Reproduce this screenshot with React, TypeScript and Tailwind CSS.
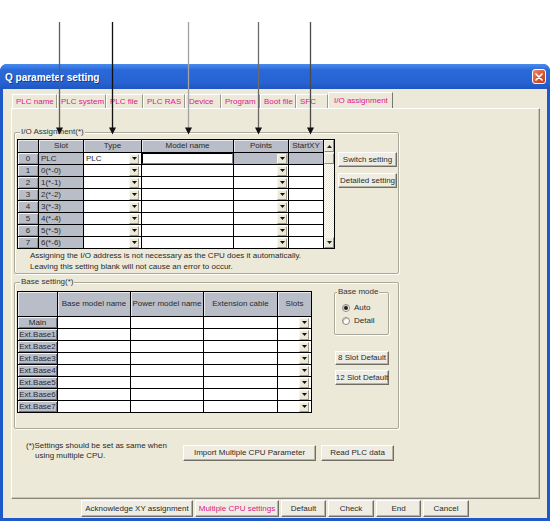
import React from 'react';

const HEAD = 'bg-[#b9bdc8]';

function Btn({ children, className = '', pink = false }: { children: React.ReactNode; className?: string; pink?: boolean }) {
  return (
    <div
      className={`flex items-center justify-center whitespace-nowrap border border-white border-r-[#716f64] border-b-[#716f64] bg-[#efede3] text-[8px] leading-none shadow-[inset_-1px_-1px_0_#b5b2a2] ${
        pink ? 'text-[#e0168a]' : 'text-[#2a2a2a]'
      } ${className}`}
    >
      {children}
    </div>
  );
}

function Drop({ className = '' }: { className?: string }) {
  return (
    <span
      className={`ml-auto flex h-[10px] w-[10px] shrink-0 items-center justify-center border border-[#f7f6f1] border-r-[#a09d8f] border-b-[#a09d8f] bg-[#ECE9D8] ${className}`}
    >
      <svg width="5" height="3" viewBox="0 0 5 3">
        <path d="M0 0h5L2.5 3z" fill="#111" />
      </svg>
    </span>
  );
}

function IOTable() {
  const slots = ['PLC', '0(*-0)', '1(*-1)', '2(*-2)', '3(*-3)', '4(*-4)', '5(*-5)', '6(*-6)'];
  const hdr = `flex h-[12px] items-center justify-center ${HEAD} text-[8px] leading-none shadow-[inset_1px_1px_0_#e6e8ee]`;
  const cell = 'flex h-[11px] items-center pl-[2px] text-[8px] leading-none';
  return (
    <div className="flex gap-px border border-black bg-black">
      <div className="grid grid-cols-[20px_44px_57px_91px_54px_34px] gap-px bg-black">
        <div className={hdr} />
        <div className={hdr}>Slot</div>
        <div className={hdr}>Type</div>
        <div className={hdr}>Model name</div>
        <div className={hdr}>Points</div>
        <div className={hdr}>StartXY</div>
        {slots.map((s, i) => (
          <React.Fragment key={s}>
            <div
              className={`flex h-[11px] items-center justify-center ${HEAD} text-[8px] leading-none shadow-[inset_1px_1px_0_#f2f3f6,inset_-1px_-1px_0_#8c8f98]`}
            >
              {i}
            </div>
            <div className={`${cell} ${HEAD}`}>{s}</div>
            <div className={`${cell} bg-white`}>
              {i === 0 ? 'PLC' : ''}
              <Drop className="mr-[2px]" />
            </div>
            {i === 0 ? (
              <div className="h-[11px] border border-black border-r-[#8a8a8a] border-b-[#8a8a8a] bg-white" />
            ) : (
              <div className={`${cell} bg-white`} />
            )}
            <div className={`${cell} ${i === 0 ? HEAD : 'bg-white'}`}>
              <Drop className="mr-[1px]" />
            </div>
            <div className={`${cell} ${i === 0 ? HEAD : 'bg-white'}`} />
          </React.Fragment>
        ))}
      </div>
      <div className="flex w-[10px] flex-col bg-[#f3f2ec]">
        <div className="flex h-[12px] items-center justify-center border border-[#f7f6f1] border-r-[#8e8b7e] border-b-[#8e8b7e] bg-[#ECE9D8]">
          <svg width="5" height="3" viewBox="0 0 5 3">
            <path d="M0 3h5L2.5 0z" fill="#222" />
          </svg>
        </div>
        <div className="mt-px h-[11px] border border-[#f7f6f1] border-r-[#8e8b7e] border-b-[#8e8b7e] bg-[#ECE9D8]" />
        <div className="flex-1 bg-[repeating-conic-gradient(#ffffff_0%_25%,#e8e6dc_0%_50%)] bg-[length:2px_2px]" />
        <div className="flex h-[11px] items-center justify-center border border-[#f7f6f1] border-r-[#8e8b7e] border-b-[#8e8b7e] bg-[#ECE9D8]">
          <svg width="5" height="3" viewBox="0 0 5 3">
            <path d="M0 0h5L2.5 3z" fill="#222" />
          </svg>
        </div>
      </div>
    </div>
  );
}

function BaseTable() {
  const bases = ['Main', 'Ext.Base1', 'Ext.Base2', 'Ext.Base3', 'Ext.Base4', 'Ext.Base5', 'Ext.Base6', 'Ext.Base7'];
  const hdr = `flex h-[24px] items-center justify-center ${HEAD} text-[8px] leading-none shadow-[inset_1px_1px_0_#e6e8ee]`;
  return (
    <div className="grid grid-cols-[39px_72px_72px_73px_33px] gap-px border border-black bg-black">
      <div className={hdr} />
      <div className={hdr}>Base model name</div>
      <div className={hdr}>Power model name</div>
      <div className={hdr}>Extension cable</div>
      <div className={hdr}>Slots</div>
      {bases.map((b) => (
        <React.Fragment key={b}>
          <div
            className={`flex h-[11px] items-center justify-center ${HEAD} text-[8px] leading-none shadow-[inset_1px_1px_0_#f2f3f6,inset_-1px_-1px_0_#6e7079]`}
          >
            {b}
          </div>
          <div className="h-[11px] bg-white" />
          <div className="h-[11px] bg-white" />
          <div className="h-[11px] bg-white" />
          <div className="flex h-[11px] items-center bg-white">
            <Drop className="mr-[2px]" />
          </div>
        </React.Fragment>
      ))}
    </div>
  );
}

function Radio({ label, checked = false }: { label: string; checked?: boolean }) {
  return (
    <div className="flex h-[10px] items-center gap-[4px] text-[8px] leading-none">
      <span className="flex h-[8px] w-[8px] items-center justify-center rounded-full border border-[#8d8b80] bg-white shadow-[inset_1px_1px_0_#c9c7bc]">
        {checked && <span className="h-[4px] w-[4px] rounded-full bg-[#1d1d1d]" />}
      </span>
      {label}
    </div>
  );
}

const GROUP = 'relative rounded-[2px] border border-[#aaa89a] shadow-[1px_1px_0_#fff,inset_1px_1px_0_#fff]';
const LEGEND = 'absolute top-[-6px] bg-[#ECE9D8] px-[1px] text-[8px] leading-[10px] text-[#333]';

export default function App() {
  const tabs = [
    { t: 'PLC name', w: 'w-[45px]' },
    { t: 'PLC system', w: 'w-[49px]' },
    { t: 'PLC file', w: 'w-[37px]' },
    { t: 'PLC RAS', w: 'w-[42px]' },
    { t: 'Device', w: 'w-[36px]' },
    { t: 'Program', w: 'w-[39px]' },
    { t: 'Boot file', w: 'w-[36px]' },
    { t: 'SFC', w: 'w-[32px]' },
  ];
  const arrows = [
    { x: 59.5, c: '#5e5e5e' },
    { x: 112.5, c: '#111111' },
    { x: 188.5, c: '#a3a3a3' },
    { x: 258.5, c: '#6a6a6a' },
    { x: 310.5, c: '#4a4a4a' },
  ];

  return (
    <div className="relative h-[521px] w-[550px] overflow-hidden bg-white pt-[64px] font-['Liberation_Sans',Arial,sans-serif] text-[#2a2a2a]">
      <div className="flex h-[457px] flex-col rounded-t-[7px] bg-[#1f58c8]">
        <div className="flex h-[25px] items-center justify-between rounded-t-[7px] bg-[linear-gradient(#4a8cec,#2a68d8_25%,#2762d2_75%,#1f56c0)] pl-[5px] pr-[4px]">
          <span className="mt-[2px] text-[10px] font-bold text-white [text-shadow:1px_1px_0_#0f3a8f]">Q parameter setting</span>
          <span className="flex h-[15px] w-[14px] items-center justify-center rounded-[3px] border border-white bg-[linear-gradient(135deg,#e8866a,#d4532f_60%,#c0401f)]">
            <svg width="8" height="8" viewBox="0 0 8 8">
              <path d="M1 1l6 6M7 1L1 7" stroke="#fff" strokeWidth="1.6" strokeLinecap="round" />
            </svg>
          </span>
        </div>

        <div className="mx-[3px] mb-[3px] flex flex-1 flex-col bg-[#ECE9D8]">
          <div className="ml-[9px] mt-[3px] flex h-[16px] items-end">
            {tabs.map((tab) => (
              <div
                key={tab.t}
                className={`flex h-[14px] ${tab.w} items-center border-l border-t border-l-white border-t-white border-r border-r-[#9a988b] pl-[3px] text-[8px] leading-none text-[#e0168a]`}
              >
                {tab.t}
              </div>
            ))}
            <div className="flex h-[16px] w-[65px] items-center border-l border-t border-l-white border-t-white border-r border-r-[#7a786d] pl-[5px] text-[8px] leading-none text-[#e0168a]">
              I/O assignment
            </div>
          </div>

          <div className="ml-[8px] flex h-[391px] w-[529px] flex-col border border-white border-r-[#8a887c] border-b-[#8a887c] shadow-[inset_-1px_-1px_0_#c8c5b5]">
            <div className={`${GROUP} ml-[2px] mt-[23px] h-[142px] w-[385px] pl-[2px] pt-[6px]`}>
              <span className={`${LEGEND} left-[5px]`}>I/O Assignment(*)</span>
              <div className="flex">
                <IOTable />
                <div className="ml-[3px] mt-[13px] flex flex-col gap-[6px]">
                  <Btn className="h-[15px] w-[59px]">Switch setting</Btn>
                  <Btn className="h-[15px] w-[59px]">Detailed setting</Btn>
                </div>
              </div>
              <p className="ml-[13px] mt-[1px] text-[8px] leading-[11px]">
                Assigning the I/O address is not necessary as the CPU does it automatically.
                <br />
                Leaving this setting blank will not cause an error to occur.
              </p>
            </div>

            <div className={`${GROUP} ml-[2px] mt-[8px] h-[147px] w-[385px] pl-[2px] pt-[8px]`}>
              <span className={`${LEGEND} left-[5px]`}>Base setting(*)</span>
              <div className="flex">
                <BaseTable />
                <div className="ml-[22px] mt-[1px] flex flex-col">
                  <div className={`${GROUP} flex h-[43px] w-[55px] flex-col gap-[3px] pl-[7px] pt-[10px]`}>
                    <span className={`${LEGEND} left-[2px]`}>Base mode</span>
                    <Radio label="Auto" checked />
                    <Radio label="Detail" />
                  </div>
                  <Btn className="ml-[1px] mt-[16px] h-[14px] w-[54px]">8 Slot Default</Btn>
                  <Btn className="ml-[1px] mt-[5px] h-[15px] w-[54px]">12 Slot Default</Btn>
                </div>
              </div>
            </div>

            <div className="ml-[14px] mt-[12px] flex items-start">
              <p className="w-[157px] text-[8px] leading-[10px]">
                (*)Settings should be set as same when
                <br />
                <span className="pl-[9px]">using multiple CPU.</span>
              </p>
              <Btn className="mt-[4px] h-[16px] w-[133px]">Import Multiple CPU Parameter</Btn>
              <Btn className="ml-[5px] mt-[4px] h-[16px] w-[73px]">Read PLC data</Btn>
            </div>
          </div>

          <div className="ml-[78px] mt-[1px] flex h-[17px] gap-[2px]">
            <Btn className="w-[112px]">Acknowledge XY assignment</Btn>
            <Btn className="w-[84px]" pink>
              Multiple CPU settings
            </Btn>
            <Btn className="w-[45px]">Default</Btn>
            <Btn className="w-[46px]">Check</Btn>
            <Btn className="w-[45px]">End</Btn>
            <Btn className="w-[46px]">Cancel</Btn>
          </div>
        </div>
      </div>

      <svg className="pointer-events-none absolute left-0 top-0" width="550" height="521">
        {arrows.map((a) => (
          <g key={a.x}>
            <line x1={a.x} y1="22" x2={a.x} y2="129" stroke={a.c} strokeWidth="1.3" />
            <path d={`M${a.x - 3.5} 127.5h7l-3.5 7z`} fill="#111" />
          </g>
        ))}
      </svg>
    </div>
  );
}
